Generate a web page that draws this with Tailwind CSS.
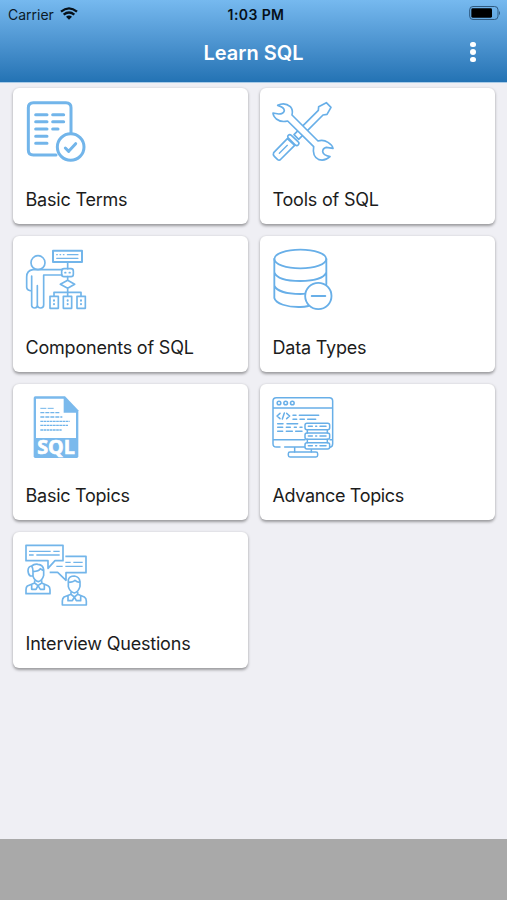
<!DOCTYPE html>
<html lang="en">

<head>
    <meta charset="UTF-8" />
    <meta name="viewport" content="width=device-width, initial-scale=1.0" />
    <title>Learn SQL</title>
    <script src="https://cdn.jsdelivr.net/npm/@tailwindcss/browser@4"></script>
</head>

<body class="flex h-screen flex-col overflow-hidden bg-[#efeff4] font-['Inter','Liberation_Sans',sans-serif] text-[#1c1c1c]">
    <!-- Header -->
    <header class="h-[83px] shrink-0 border-b border-[#a9cbe7] bg-linear-to-b from-[#76b9ef] to-[#2373b4]">
        <!-- Status bar -->
        <div class="grid h-7 grid-cols-3 items-center pr-[6px] pl-2 text-[#0b1a28]">
            <div class="flex items-center gap-[6px]">
                <span class="pt-px text-[14px] leading-none">Carrier</span>
                <svg class="mb-[2px] h-[13px] w-[18px]" viewBox="0 0 54 39" fill="none" stroke="#061019" stroke-width="7">
                    <path d="M3 14Q27 -6 51 14" />
                    <path d="M11 23Q27 10 43 23" />
                    <path d="M18 29Q27 22 36 29L27 38Z" fill="#061019" stroke="none" />
                </svg>
            </div>
            <span class="pt-px pl-[3px] text-center text-[14px] leading-none font-semibold tracking-[0.4px] whitespace-nowrap text-[#061019]">1:03 PM</span>
            <svg class="mb-[2px] h-[14px] w-[32px] justify-self-end" viewBox="0 0 96 42">
                <rect x="2" y="1.500" width="85" height="39" rx="10" fill="none" stroke="#2f5a80" stroke-width="3" />
                <rect x="7" y="7" width="62" height="28" rx="4" fill="#000" />
                <path d="M90 14Q96 21 90 28Z" fill="#2f5a80" />
            </svg>
        </div>
        <!-- Title bar -->
        <div class="grid h-12 grid-cols-[1fr_auto_1fr] items-center">
            <h1 class="col-start-2 pt-px text-[20px] font-semibold text-white">Learn SQL</h1>
            <button class="mr-[31.500px] flex flex-col gap-[2px] justify-self-end" aria-label="Menu">
                <span class="size-[5.5px] rounded-full bg-white"></span>
                <span class="size-[5.5px] rounded-full bg-white"></span>
                <span class="size-[5.5px] rounded-full bg-white"></span>
            </button>
        </div>
    </header>

    <!-- Topics -->
    <main class="grid flex-1 auto-rows-[136px] grid-cols-2 content-start gap-3 pt-[5px] pr-3 pl-[13px]">
        <div class="flex flex-col justify-between rounded-md bg-white pt-[11px] pb-[11px] pl-[11px] shadow-[0_1.500px_3px_rgba(0,0,0,0.36)]">
            <svg class="size-16" viewBox="48 33 192 192" fill="none" stroke="#72b5ea" stroke-width="9" stroke-linecap="round" stroke-linejoin="round">
                <path d="M144 201H76Q61 201 61 186V59Q61 44 76 44H174Q189 44 189 59V136" />
                <path d="M83 80H117M134 80H167M83 101H117M134 101H167M83 123H117M134 123H150M83 145H117M83 166H117" />
                <circle cx="188" cy="177" r="40" />
                <path d="M172 180L182 190L203 167" />
            </svg>
            <span class="pl-[1.500px] text-[18px] leading-[26px] tracking-[-0.2px]">Basic Terms</span>
        </div>

        <div class="flex flex-col justify-between rounded-md bg-white pt-[11px] pb-[11px] pl-[11px] shadow-[0_1.500px_3px_rgba(0,0,0,0.36)]">
            <svg class="size-16" viewBox="45 33 192 192" fill="#fff" stroke="#68afe8" stroke-width="5" stroke-linecap="round" stroke-linejoin="round">
                <!-- screwdriver -->
                <path d="M114 140L187 67L188 56L211 44L225 58L213 79L201 81L128 154Z" />
                <path d="M94 152L53 194Q50 200 55 205L65 215Q70 219 75 213L116 172Z" />
                <path d="M97 142Q93 147 98 151L118 171Q123 175 127 170Q131 165 126 161L106 142Q101 138 97 142Z" />
                <path d="M70 196L94 172" stroke-width="4" />
                <!-- wrench -->
                <path d="M65 52Q86 41 103 56Q112 66 108 81L186 159Q202 154 216 163Q229 171 231 181L211 178Q200 181 200 191Q202 202 222 206Q207 220 189 215Q168 207 173 176L95 99Q75 104 61 93Q51 83 51 75L68 78Q82 78 85 68Q85 58 65 52Z" />
            </svg>
            <span class="pl-[1.500px] text-[18px] leading-[26px] tracking-[-0.2px]">Tools of SQL</span>
        </div>

        <div class="flex flex-col justify-between rounded-md bg-white pt-[11px] pb-[11px] pl-[11px] shadow-[0_1.500px_3px_rgba(0,0,0,0.36)]">
            <svg class="size-16" viewBox="48 33 192 192" fill="none" stroke="#72b5ea" stroke-width="5" stroke-linecap="round" stroke-linejoin="round">
                <!-- presenter -->
                <circle cx="90" cy="80" r="21" />
                <path d="M162 101H75Q56 103 56 123V154Q57 163 71 165V209Q72 216 80 216Q88 216 88 208V149M88 208Q90 216 98 216Q107 216 107 207V117H162M71 120V165" />
                <rect x="161" y="98" width="35" height="24" rx="7" />
                <path d="M171 110H173M184 110H186" />
                <!-- chart -->
                <rect x="135" y="44" width="87" height="34" stroke-width="6" />
                <path d="M179 80V98M179 122V133M179 157V180M138 180V169H219V180M179 133L200 145L179 157L157 145Z" />
                <path d="M146 56H148M156 56H158M166 56H168M178 56H210M146 67H210" stroke-width="3.500" />
                <rect x="126" y="181" width="25" height="36" />
                <rect x="166" y="181" width="25" height="36" />
                <rect x="207" y="181" width="25" height="36" />
                <path d="M138 193V194M138 204V205M179 193V194M179 204V205M219 193V194M219 204V205" stroke-width="6" />
            </svg>
            <span class="pl-[1.500px] text-[18px] leading-[26px] tracking-[-0.2px]">Components of SQL</span>
        </div>

        <div class="flex flex-col justify-between rounded-md bg-white pt-[11px] pb-[11px] pl-[11px] shadow-[0_1.500px_3px_rgba(0,0,0,0.36)]">
            <svg class="size-16" viewBox="45 33 192 192" fill="none" stroke="#68afe8" stroke-width="5.500" stroke-linecap="round">
                <ellipse cx="133" cy="69" rx="78" ry="28" />
                <path d="M55 69V186C59 203 94 214 133 213Q146 213 157 210M211 69V145M55 109C62 127 95 135 133 135S205 127 211 109M55 149C62 166 95 174 133 174Q142 174 149 173" />
                <circle cx="187" cy="180" r="39.500" fill="#fff" />
                <path d="M167 180H208" />
            </svg>
            <span class="pl-[1.500px] text-[18px] leading-[26px] tracking-[-0.2px]">Data Types</span>
        </div>

        <div class="flex flex-col justify-between rounded-md bg-white pt-[11px] pb-[11px] pl-[11px] shadow-[0_1.500px_3px_rgba(0,0,0,0.36)]">
            <svg class="size-16" viewBox="48 33 192 192" fill="none" stroke="#72b5ea">
                <path d="M82 37H171L211 79V217Q211 222 206 222H82Q77 222 77 217V42Q77 37 82 37Z" fill="#7ab9ec" stroke="none" />
                <path d="M84 44H167V86H204V162H84Z" fill="#fff" stroke="none" />
                <path d="M97 73H139" stroke-width="3" stroke-dasharray="18 4" />
                <path d="M97 86H154" stroke-width="4" stroke-dasharray="12 3" />
                <path d="M97 99H163" stroke-width="4" stroke-dasharray="12 3" />
                <path d="M97 112H185M97 124H180M97 138H161" stroke-width="4" stroke-dasharray="8 1.500" />
                <text x="144" y="211" text-anchor="middle" textLength="113" lengthAdjust="spacingAndGlyphs" font-family="Open Sans, sans-serif" font-size="59" font-weight="700" fill="#fff" stroke="#fff" stroke-width="2">SQL</text>
            </svg>
            <span class="pl-[1.500px] text-[18px] leading-[26px] tracking-[-0.25px]">Basic Topics</span>
        </div>

        <div class="flex flex-col justify-between rounded-md bg-white pt-[11px] pb-[11px] pl-[11px] shadow-[0_1.500px_3px_rgba(0,0,0,0.36)]">
            <svg class="size-16" viewBox="45 33 192 192" fill="none" stroke="#68afe8" stroke-width="4.500" stroke-linecap="round" stroke-linejoin="round">
                <!-- monitor -->
                <path d="M72 189H61Q51 189 51 179V51Q51 41 61 41H220Q230 41 230 51V179Q230 188 222 190M86 189H147M51 72H230M51 167H147M222 167H230M116 190V204M166 197V204" />
                <rect x="97" y="204" width="88" height="15" rx="5" />
                <circle cx="69" cy="57" r="5.500" />
                <circle cx="89" cy="57" r="5.500" />
                <circle cx="109" cy="57" r="5.500" />
                <!-- code -->
                <path d="M72 88L63 96L72 104M92 88L101 96L92 104M85 87L79 105" />
                <path d="M111 94H120M130 94H188M111 106H122M132 106H145M155 106H179M65 119H81M93 119H125M65 130H80M91 130H103M115 130H121M132 130H138M65 142H80M91 142H109M119 142H138" />
                <!-- servers -->
                <rect x="147" y="118" width="74" height="19" rx="6" fill="#fff" />
                <rect x="147" y="147" width="74" height="19" rx="6" fill="#fff" />
                <rect x="147" y="176" width="74" height="19" rx="6" fill="#fff" />
                <path d="M154 137V147M214 137V147M154 166V176M214 166V176M157 127H169M179 127H182M192 127H210M157 156H169M179 156H182M192 156H210M157 185H169M179 185H182M192 185H210" />
            </svg>
            <span class="pl-[1.500px] text-[18px] leading-[26px] tracking-[-0.35px]">Advance Topics</span>
        </div>

        <div class="flex flex-col justify-between rounded-md bg-white pt-[11px] pb-[11px] pl-[11px] shadow-[0_1.500px_3px_rgba(0,0,0,0.36)]">
            <svg class="size-16" viewBox="48 33 192 192" fill="none" stroke="#72b5ea" stroke-width="5" stroke-linejoin="round">
                <!-- speech bubbles -->
                <path d="M54 40H165V86H141L120 109V86H54Z" />
                <path d="M172 73H234V122H174V145L149 121H125" />
                <path d="M63 58H128M136 58H155M63 69H77M85 69H155M172 91H188M196 91H224M145 103H164M172 103H224" stroke-width="4" />
                <!-- interviewer -->
                <path d="M73 132H67Q60 128 60 115Q61 103 71 102Q79 95 90 97Q105 98 107 113V130Q103 146 91 149Q80 147 75 133V119Q93 118 97 110L107 116M71 102Q75 108 75 119" />
                <path d="M80 145V153L58 162Q54 165 54 173V185H126V173Q126 164 120 161L101 153V145M71 157V172H84L90 161L97 172H109V157M80 153L90 161L101 153" />
                <!-- candidate -->
                <path d="M181 151V143Q184 132 199 132Q214 134 216 149V163Q212 179 199 183Q185 180 181 164V151Q196 151 201 145Q206 150 216 151" />
                <path d="M189 179V187L168 195Q163 199 163 207V219H235V207Q235 199 229 195L209 187V179M180 191V206H193L199 195L205 206H218V191M189 187L199 195L209 187" />
            </svg>
            <span class="pl-[1.500px] text-[18px] leading-[26px] tracking-[-0.2px]">Interview Questions</span>
        </div>
    </main>

    <!-- Bottom banner -->
    <footer class="h-[61px] shrink-0 bg-[#a9a9a9]"></footer>
</body>

</html>
